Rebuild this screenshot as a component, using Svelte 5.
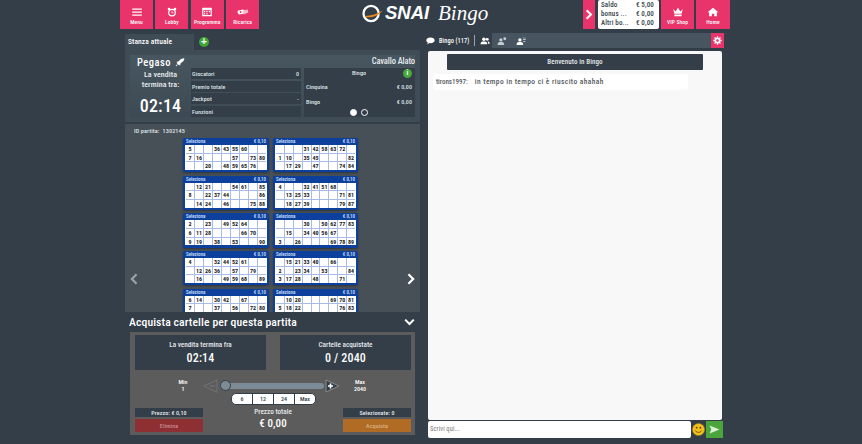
<script>
  const tickets = [
    ["5,,,36,43,55,60,,","7,16,,,,57,,73,80",",,20,,48,59,65,76,"],
    [",,,31,42,58,63,72,","1,10,,35,45,,,,82",",17,29,,47,,,74,84"],
    [",12,21,,,54,61,,85","8,,22,37,44,,,,86",",14,24,,46,,,75,88"],
    ["4,,,32,41,51,68,,",",13,25,33,,,,71,81",",18,27,39,,,,79,87"],
    ["2,,23,,49,52,64,,","6,11,28,,,,66,70,","9,19,,38,,53,,,90"],
    [",,,30,,50,62,77,83",",15,,34,40,56,67,,","3,,26,,,,69,78,89"],
    ["4,,,32,44,52,61,,",",12,26,36,,57,,79,",",16,,,49,59,68,,89"],
    [",15,21,33,40,,66,,","2,,23,34,,53,,,84","3,17,28,,48,,,71,"],
    ["6,14,,30,42,,67,,","7,,,37,,56,,72,80",",,,,,,,,"],
    [",10,20,,,,69,70,81","5,18,22,,,,,76,83",",,,,,,,,"]
  ].map(t => t.flatMap(r => r.split(",")));
  const left = [["Menu","menu"],["Lobby","clock"],["Programma","cal"],["Ricarica","money"]];
</script>

{#snippet icon(kind)}
  <svg class="ic" viewBox="0 0 20 16" aria-hidden="true">
    {#if kind === "menu"}
      <path d="M2 2h16v2.400H2zM2 7h16v2.400H2zM2 12h16v2.400H2z" fill="#fff"/>
    {:else if kind === "clock"}
      <circle cx="10" cy="9" r="5.500" fill="none" stroke="#fff" stroke-width="2"/>
      <path d="M10 6v3.400h2.600" fill="none" stroke="#fff" stroke-width="1.200"/>
      <circle cx="5" cy="3" r="2.200" fill="#fff"/><circle cx="15" cy="3" r="2.200" fill="#fff"/>
    {:else if kind === "cal"}
      <path d="M3 1h14a1 1 0 0 1 1 1v13H2V2a1 1 0 0 1 1-1z" fill="#fff"/>
      <path d="M4 5h12v8H4z" fill="#e8336b"/>
      <path d="M5 6.500h2v2H5zM9 6.500h2v2H9zM13 6.500h2v2h-2zM5 10h2v2H5zM9 10h2v2H9z" fill="#fff"/>
    {:else if kind === "money"}
      <path d="M1 6l9-2 3 1-2 6-8 1-2-3z" fill="#fff"/>
      <path d="M10 5l8-1 1 5-8 3z" fill="#f7b8cc"/>
      <circle cx="6" cy="8" r="1.500" fill="#e8336b"/>
    {:else if kind === "crown"}
      <path d="M2 3l4 4 4-6 4 6 4-4-2 8H4zM4 12h12v3H4z" fill="#fff"/>
    {:else if kind === "home"}
      <path d="M10 1l9 7.500h-2.500V15H12v-4H8v4H3.500V8.500H1z" fill="#fff"/>
    {/if}
  </svg>
{/snippet}

{#snippet users(x)}
  <svg class="tabic" viewBox="0 0 18 14" aria-hidden="true">
    <circle cx="7" cy="4" r="3.200" fill={x}/><path d="M1 13c0-4 2-5 6-5s6 1 6 5z" fill={x}/>
    <circle cx="13" cy="4" r="2.600" fill={x}/><path d="M14 8c2 0 3.500 1 3.500 4H14.500z" fill={x}/>
  </svg>
{/snippet}

<div class="page">
  <header class="top">
    <nav class="group">
      {#each left as [label, kind]}
        <div class="navbtn">{@render icon(kind)}<span>{label}</span></div>
      {/each}
    </nav>
    <div class="logo">
      <svg class="ring" viewBox="0 0 24 20" aria-hidden="true">
        <circle cx="10.500" cy="10" r="8" fill="none" stroke="#fff" stroke-width="2.400"/>
        <path d="M4 12.500c7 0 13-2 19-6-4 5-10 8-18 7.500z" fill="#ee8a1d"/>
      </svg>
      <span class="snai">SNAI</span><span class="bingo">Bingo</span>
    </div>
    <div class="group rightgroup">
      <div class="toggle">
        <svg viewBox="0 0 10 14" aria-hidden="true"><path d="M2 1.500l5.500 5.500L2 12.500" fill="none" stroke="#fff" stroke-width="2.600"/></svg>
      </div>
      <div class="bal">
        <div><span>Saldo</span><span>€ 5,00</span></div>
        <div><span>bonus ...</span><span>€ 0,00</span></div>
        <div><span>Altri bo...</span><span>€ 0,00</span></div>
      </div>
      <div class="navbtn vip">{@render icon("crown")}<span>VIP Shop</span></div>
      <div class="navbtn home">{@render icon("home")}<span>Home</span></div>
    </div>
  </header>

  <div class="main">
    <section class="leftcol">
      <div class="roomtabs">
        <div class="roomtab">Stanza attuale</div>
        <div class="plus">+</div>
      </div>
      <div class="roompanel">
        <div class="roominner">
          <div class="timer">
            <div class="pegaso">Pegaso
              <svg viewBox="0 0 16 14" aria-hidden="true"><path d="M15 0c-4 0-7 2-9 5L2 6l2 1.500-1 1.500 2 2 1.500-1L8 12l1-4c3-2 6-4 6-8z" fill="#fff"/><path d="M1 12l2-2 1 1-2 2z" fill="#fff"/></svg>
            </div>
            <div class="sale">La vendita<br/>termina tra:</div>
            <div class="clock">02:14</div>
          </div>
          <div class="mid">
            <div class="roomname">Cavallo Alato</div>
            <div class="cols">
              <div class="rows">
                <div class="row"><span>Giocatori</span><span>0</span></div>
                <div class="row"><span>Premio totale</span></div>
                <div class="row"><span>Jackpot</span><span>-</span></div>
                <div class="row"><span>Funzioni</span></div>
              </div>
              <div class="prizes">
                <div class="phead"><span>Bingo</span><b>i</b></div>
                <div class="prow"><span>Cinquina</span><span>€ 0,00</span></div>
                <div class="prow"><span>Bingo</span><span>€ 0,00</span></div>
                <div class="dots"><i class="on"></i><i></i></div>
              </div>
            </div>
          </div>
        </div>
      </div>

      <div class="game">
        <div class="gid">ID partita: &nbsp;1302145</div>
        <div class="tickets">
          {#each tickets as t}
            <div class="ticket">
              <div class="thead"><span>Seleziona</span><span>€ 0,10</span></div>
              <div class="grid">
                {#each t as n}<div class="cell">{n}</div>{/each}
              </div>
            </div>
          {/each}
        </div>
        <svg class="arrow al" viewBox="0 0 10 14" aria-hidden="true"><path d="M8 1.500L2.500 7 8 12.500" fill="none" stroke="#9aa3ab" stroke-width="2.600"/></svg>
        <svg class="arrow ar" viewBox="0 0 10 14" aria-hidden="true"><path d="M2 1.500L7.500 7 2 12.500" fill="none" stroke="#fff" stroke-width="2.600"/></svg>
      </div>

      <div class="buyhead">
        <span>Acquista cartelle per questa partita</span>
        <svg viewBox="0 0 14 10" aria-hidden="true"><path d="M1.500 2l5.500 5.500L12.500 2" fill="none" stroke="#fff" stroke-width="2.600"/></svg>
      </div>
      <div class="buy">
        <div class="boxes">
          <div class="box"><div>La vendita termina fra</div><strong>02:14</strong></div>
          <div class="box"><div>Cartelle acquistate</div><strong>0 / 2040</strong></div>
        </div>
        <div class="sliderrow">
          <div class="mm">Min<br/>1</div>
          <div class="sl">
            <svg class="tri" viewBox="0 0 15 14" aria-hidden="true"><path d="M14 1v12L1 7z" fill="none" stroke="#6e6e6e" stroke-width="1.200"/><path d="M7 6.200h5v1.600H7z" fill="#6e6e6e"/></svg>
            <div class="track"><i></i></div>
            <svg class="tri" viewBox="0 0 15 14" aria-hidden="true"><path d="M1 1v12l13-6z" fill="#333e48" stroke="#8a8a8a" stroke-width="1"/><path d="M3 6.200h5v1.600H3zM4.700 4.500h1.600v5H4.700z" fill="#fff"/></svg>
          </div>
          <div class="mm">Max<br/>2040</div>
        </div>
        <div class="quick"><span>6</span><span>12</span><span>24</span><span>Max</span></div>
        <div class="foot">
          <div class="fcol">
            <div class="chip">Prezzo: € 0,10</div>
            <div class="act red">Elimina</div>
          </div>
          <div class="total"><div>Prezzo totale</div><strong>€ 0,00</strong></div>
          <div class="fcol">
            <div class="chip">Selezionate: 0</div>
            <div class="act orange">Acquista</div>
          </div>
        </div>
      </div>
    </section>

    <section class="chat">
      <div class="chattabs">
        <div class="ctab">
          <svg class="bubble" viewBox="0 0 14 12" aria-hidden="true"><path d="M7 .5c3.700 0 6.500 2 6.500 4.500S10.700 9.500 7 9.500c-.7 0-1.300 0-1.900-.2L2 11.500l.7-3C1.300 7.600.5 6.400.5 5 .5 2.500 3.300.5 7 .5z" fill="#fff"/></svg>
          <span>Bingo (117)</span>
          <em></em>
          {@render users("#fff")}
        </div>
        <div class="cicons">
          <svg class="tabic" viewBox="0 0 18 14" aria-hidden="true"><circle cx="7" cy="5" r="3" fill="#c3ccd1"/><path d="M1 14c0-4 2-5 6-5s6 1 6 5z" fill="#c3ccd1"/><circle cx="14" cy="3" r="2.600" fill="#c3ccd1"/></svg>
          <svg class="tabic" viewBox="0 0 18 14" aria-hidden="true"><circle cx="7" cy="5" r="3" fill="#fff"/><path d="M1 14c0-4 2-5 6-5s6 1 6 5z" fill="#fff"/><path d="M12 1h6v1.200h-6zM12.500 4h5v1.200h-5zM13 7h4v1.200h-4z" fill="#dfe4e7"/></svg>
        </div>
        <div class="gear">
          <svg viewBox="0 0 14 14" aria-hidden="true"><circle cx="7" cy="7" r="3.300" fill="none" stroke="#fff" stroke-width="2.400"/><path d="M7 .5v2.500M7 11v2.500M.5 7H3M11 7h2.500M2.400 2.400l1.800 1.800M9.800 9.800l1.800 1.800M11.600 2.400L9.800 4.200M4.200 9.800l-1.800 1.800" stroke="#fff" stroke-width="2"/></svg>
        </div>
      </div>
      <div class="chatbody">
        <div class="welcome">Benvenuto in Bingo</div>
        <div class="msg"><span class="who">tirons1997:</span><span>in tempo in tempo ci è riuscito ahahah</span></div>
      </div>
      <div class="inputrow">
        <div class="input">Scrivi qui...</div>
        <div class="smiley">
          <svg viewBox="0 0 14 14" aria-hidden="true"><circle cx="7" cy="7" r="6.500" fill="#f3c11b" stroke="#b98a10" stroke-width=".6"/><circle cx="5" cy="5" r="1" fill="#5a3b0a"/><circle cx="9" cy="5" r="1" fill="#5a3b0a"/><path d="M3.500 8.200c1.500 2.500 5.500 2.500 7 0" fill="none" stroke="#5a3b0a" stroke-width=".9"/></svg>
        </div>
        <div class="send">
          <svg viewBox="0 0 12 10" aria-hidden="true"><path d="M.5 .5L11.500 5 .5 9.500l2-4.500z" fill="#dff2d8"/></svg>
        </div>
      </div>
    </section>
  </div>
</div>

<style>
  :global(body) { margin: 0; background: #333e48; }
  .page {
    width: 862px; height: 444px; overflow: hidden; box-sizing: border-box;
    padding-left: 120px;
    background: #333e48; color: #fff;
    font-family: Roboto, "Liberation Sans", sans-serif;
    font-stretch: 75%;
    white-space: nowrap;
  }
  .top { display: flex; height: 29px; width: 610px; justify-content: space-between; position: relative; }
  .group { display: flex; gap: 2.400px; }
  .navbtn {
    width: 33px; height: 29px; background: #e8336b; display: flex; flex-direction: column;
    align-items: center; padding-top: 7px; box-sizing: border-box;
    font-size: 5.500px; font-weight: 500; letter-spacing: .15px; line-height: 7px;
  }
  .ic { width: 12px; height: 10px; margin-bottom: 2px; flex: none; }
  .logo { position: absolute; left: 241px; top: 2px; display: flex; align-items: center; height: 22px; }
  .ring { width: 23px; height: 19px; margin-right: 1px; flex: none; }
  .snai { font: italic 700 18.500px "Liberation Sans", sans-serif; width: 53px; }
  .bingo { font: italic 400 21px "Liberation Serif", serif; }
  .rightgroup { gap: 0; }
  .toggle { width: 12px; height: 29px; background: #e8336b; display: flex; align-items: center; justify-content: center; margin-right: 3px; }
  .toggle svg { width: 8px; height: 11px; }
  .bal {
    width: 61px; height: 29px; background: #fff; border-radius: 2px; color: #333e48; box-sizing: border-box;
    padding: 1px 5px 1px 3px; display: flex; flex-direction: column; justify-content: space-between;
    font-size: 7px; font-weight: 500; margin-right: 2px; line-height: 9px; letter-spacing: .15px;
  }
  .bal div { display: flex; justify-content: space-between; }
  .vip { margin-right: 2px; }
  .home { width: 34px; }

  .main { display: flex; padding-left: 5px; }
  .leftcol { width: 295px; }
  .roomtabs { display: flex; align-items: center; height: 16px; padding-top: 5px; }
  .roomtab { width: 69px; height: 16px; background: #3f4b55; font-size: 7.500px; font-weight: 500; line-height: 15px; padding-left: 3px; box-sizing: border-box; letter-spacing: .1px; }
  .plus { width: 10px; height: 10px; border-radius: 50%; background: #3fa535; margin-left: 5px; font: 700 10px/10px "Liberation Sans", sans-serif; text-align: center; }
  .roompanel { background: #3f4b55; padding: 5px; height: 62px; }
  .roominner { display: flex; height: 62px; background: linear-gradient(#47565f, #3d4a54); }
  .timer { width: 61px; text-align: center; flex: none; }
  .pegaso { font-size: 10.500px; font-weight: 500; letter-spacing: .5px; display: flex; justify-content: center; align-items: center; gap: 4px; height: 13px; margin-top: 1px; padding-left: 1px; }
  .pegaso svg { width: 10px; height: 9px; }
  .sale { font-size: 8px; font-weight: 500; line-height: 9.500px; color: #e8ecee; letter-spacing: .05px; margin-top: 1px; }
  .clock { font-size: 18px; font-weight: 500; letter-spacing: .2px; line-height: 22px; margin-top: 6px; }
  .mid { flex: 1; display: flex; flex-direction: column; }
  .roomname { height: 13px; line-height: 13px; text-align: right; font-size: 8.500px; font-weight: 500; letter-spacing: -.1px; color: #e8ecee; }
  .cols { display: flex; gap: 3px; height: 49px; }
  .rows { width: 110px; display: flex; flex-direction: column; gap: 1.500px; }
  .row { flex: 1; background: #333e48; display: flex; justify-content: space-between; align-items: center; font-size: 6px; font-weight: 500; padding: 0 2px 0 1px; color: #dfe4e7; letter-spacing: .1px; }
  .prizes { flex: 1; background: #333e48; font-size: 6px; font-weight: 500; color: #dfe4e7; position: relative; padding: 0 3px 0 2px; letter-spacing: .1px; }
  .phead { text-align: center; height: 11px; line-height: 10px; position: relative; }
  .phead b { position: absolute; right: 0; top: 1px; width: 9px; height: 9px; line-height: 9px; border-radius: 50%; background: #49a83e; color: #fff; font-size: 7px; }
  .prow { display: flex; justify-content: space-between; height: 15px; align-items: center; }
  .dots { display: flex; justify-content: center; gap: 4px; }
  .dots i { width: 5px; height: 5px; border-radius: 50%; border: 1px solid #fff; }
  .dots i.on { background: #fff; }
  .game { margin-top: 2px; height: 188px; background: #474f57; position: relative; overflow: hidden; }
  .gid { font-size: 6.200px; font-weight: 500; padding: 3px 0 0 9px; height: 11px; color: #dfe4e7; letter-spacing: .1px; }
  .tickets { display: grid; grid-template-columns: 86px 85px; gap: 3.500px 4px; margin: 0 0 0 58px; }
  .ticket { background: #0d3f9c; border-radius: 2px; height: 34.200px; padding: 0 2px; box-sizing: border-box; box-shadow: 0 1px 2px #0005; }
  .thead { display: flex; justify-content: space-between; font-size: 5px; font-weight: 500; height: 7px; line-height: 6.500px; padding: 0 1px; color: #cfe0ff; }
  .grid { display: grid; grid-template-columns: repeat(9, minmax(0, 1fr)); grid-auto-rows: 7.660px; background: #a9bce6; gap: 1px; border-style: solid; border-color: #fff; border-width: 0 1px; height: 25px; box-sizing: border-box; }
  .cell { background: #fff; color: #222; font-size: 6px; font-weight: 700; text-align: center; line-height: 7.660px; }
  .arrow { position: absolute; top: 149px; width: 10px; height: 12px; }
  .al { left: 4px; } .ar { left: 281px; }
  .buyhead { height: 20px; display: flex; justify-content: space-between; align-items: center; padding: 0 5px 0 4px; font-size: 11.700px; font-weight: 500; letter-spacing: .1px; }
  .buyhead svg { width: 11px; height: 8px; }
  .buy { width: 285px; margin-left: 5px; height: 103px; background: #5c5c5c; box-sizing: border-box; padding: 3px 5px; }
  .boxes { display: flex; justify-content: space-between; width: 276px; }
  .box { width: 131px; height: 35px; background: #333e48; text-align: center; font-size: 7.200px; font-weight: 500; padding-top: 5px; box-sizing: border-box; line-height: 9px; color: #e5e8ea; }
  .box strong { display: block; font-size: 12px; font-weight: 500; line-height: 17px; margin-top: 1px; color: #fff; letter-spacing: .15px; }
  .sliderrow { display: flex; align-items: center; justify-content: center; margin-top: 8px; height: 15px; margin-left: -2px; }
  .mm { width: 40px; text-align: center; font-size: 6px; font-weight: 500; line-height: 6.500px; }
  .sl { display: flex; align-items: center; width: 137px; }
  .tri { width: 15px; height: 14px; flex: none; }
  .track { flex: 1; height: 6px; background: #7d8b96; border-radius: 3px; position: relative; margin: 0 1px 0 2px; }
  .track i { position: absolute; left: 0; top: -2.500px; width: 11px; height: 11px; border-radius: 50%; background: #7d8b96; border: 1px solid #333e48; box-sizing: border-box; }
  .quick { display: flex; width: 83px; height: 10px; margin: 0 0 0 96px; background: #fff; border-radius: 5px; border: .5px solid #333e48; color: #333e48; font-size: 6px; font-weight: 500; line-height: 10px; }
  .quick span { flex: 1; text-align: center; border-left: .5px solid #333e48; }
  .quick span:first-child { border: 0; }
  .foot { display: flex; justify-content: space-between; width: 276px; margin-top: 3px; }
  .fcol { width: 68px; }
  .chip { height: 9px; background: #333e48; font-size: 6px; font-weight: 500; text-align: center; line-height: 9px; margin-bottom: 2px; color: #e5e8ea; letter-spacing: .1px; }
  .act { height: 13px; font-size: 6px; font-weight: 500; text-align: center; line-height: 13px; letter-spacing: .1px; }
  .red { background: #8e2f33; color: #c98a8c; }
  .orange { background: #b06c24; color: #d9b184; }
  .total { text-align: center; font-size: 7.200px; font-weight: 500; color: #e5e8ea; line-height: 9px; margin-top: -1px; }
  .total strong { display: block; font-size: 11px; font-weight: 500; line-height: 14px; margin-top: 1px; color: #fff; letter-spacing: .1px; }

  .chat { width: 299px; margin-left: 5px; margin-top: 4px; position: relative; }
  .chattabs { height: 15px; background: #46555f; display: flex; align-items: center; position: relative; }
  .ctab { background: #333e48; height: 15px; width: 67px; display: flex; align-items: center; font-size: 6.300px; font-weight: 500; flex: none; letter-spacing: .1px; }
  .bubble { width: 9px; height: 8px; margin: 0 4px 0 1px; flex: none; }
  .ctab em { width: 1px; height: 11px; background: #9aa3ab; margin: 0 5px; flex: none; }
  .tabic { width: 10px; height: 8px; flex: none; }
  .cicons { display: flex; gap: 9px; margin-left: 5px; }
  .gear { position: absolute; left: 286px; top: 0; width: 13px; height: 15px; background: #e8336b; display: flex; align-items: center; justify-content: center; }
  .gear svg { width: 9px; height: 9px; }
  .chatbody { margin: 3px 2px 0 3px; height: 369px; background: #f8f8f8; border-radius: 2px; box-sizing: border-box; padding: 3px 5px; color: #333e48; }
  .welcome { width: 256px; height: 16px; background: #333e48; color: #e5e8ea; margin: 0 0 0 14px; text-align: center; font-size: 7px; font-weight: 500; line-height: 16px; letter-spacing: .1px; border-radius: 1px; }
  .msg { width: 255px; height: 16px; background: #fff; border-radius: 3px; margin: 4px 0 0 0; font-size: 7.500px; font-weight: 500; line-height: 16px; padding-left: 3px; box-sizing: border-box; color: #555c62; letter-spacing: .4px; }
  .who { margin-right: 7px; font-size: 7px; letter-spacing: 0; }
  .inputrow { display: flex; margin: 1px 0 0 3px; height: 17px; align-items: center; }
  .input { width: 263px; height: 17px; background: #fff; border-radius: 2px; color: #777; font-size: 6.500px; padding-left: 2px; box-sizing: border-box; line-height: 17px; letter-spacing: .1px; }
  .smiley { width: 14px; height: 14px; margin-left: 1px; }
  .smiley svg { width: 13px; height: 13px; display: block; }
  .send { width: 17px; height: 17px; background: #4aa63c; display: flex; align-items: center; justify-content: center; }
  .send svg { width: 11px; height: 9px; }
</style>
